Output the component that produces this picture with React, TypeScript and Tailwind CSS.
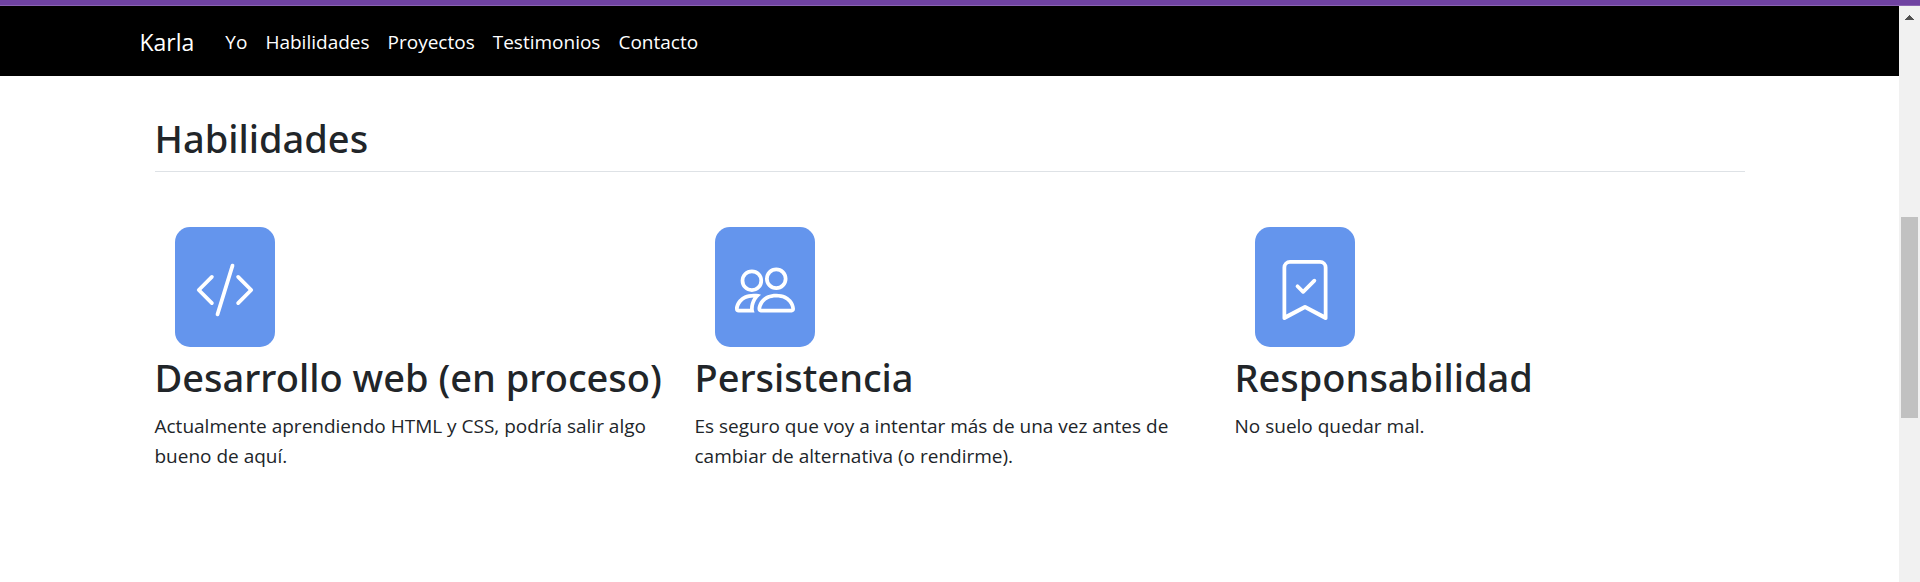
import { BsBookmarkCheck, BsCodeSlash, BsPeople } from "react-icons/bs";
import type { IconType } from "react-icons";

type Skill = { icon: IconType; title: string; text: string };

const links = ["Yo", "Habilidades", "Proyectos", "Testimonios", "Contacto"];

const skills: Skill[] = [
  {
    icon: BsCodeSlash,
    title: "Desarrollo web (en proceso)",
    text: "Actualmente aprendiendo HTML y CSS, podría salir algo bueno de aquí.",
  },
  {
    icon: BsPeople,
    title: "Persistencia",
    text: "Es seguro que voy a intentar más de una vez antes de cambiar de alternativa (o rendirme).",
  },
  {
    icon: BsBookmarkCheck,
    title: "Responsabilidad",
    text: "No suelo quedar mal.",
  },
];

function Navbar() {
  return (
    <nav className="bg-black pt-[13px] pb-[11px] text-white">
      <div className="mx-auto flex max-w-[1650px] items-center px-[15px]">
        <a href="#inicio" className="mr-[22px] py-1 text-[23px] leading-[38px]">
          Karla
        </a>
        <ul className="flex text-[19px] leading-[30px]">
          {links.map((link) => (
            <li key={link}>
              <a href={"#" + link.toLowerCase()} className="block px-[9px]">
                {link}
              </a>
            </li>
          ))}
        </ul>
      </div>
    </nav>
  );
}

function SkillCard({ icon: Icon, title, text }: Skill) {
  return (
    <article>
      <div className="ml-5 flex h-[120px] w-[100px] items-center justify-center rounded-[15px] bg-[#6495ed] pt-1.5 text-white">
        <Icon size={60} aria-hidden="true" />
      </div>
      <h2 className="mt-1.5 mb-2.5 font-['Noto_Sans','Open_Sans',sans-serif] text-[38px] leading-[48px] font-medium">
        {title}
      </h2>
      <p className="text-[19px] leading-[30px]">{text}</p>
    </article>
  );
}

function Scrollbar() {
  return (
    <div className="flex w-[21px] shrink-0 flex-col items-center bg-[#f1f1f1] pt-[9px]" aria-hidden="true">
      <svg width="9" height="5" viewBox="0 0 9 5" fill="#505050" shapeRendering="crispEdges">
        <path d="M4 0h1v1h1v1h1v1h1v1h1v1H0V4h1V3h1V2h1V1h1z" />
      </svg>
      <div className="mt-[197px] h-[201px] w-[17px] bg-[#c1c1c1]" />
    </div>
  );
}

export default function App() {
  return (
    <div className="flex min-h-screen flex-col bg-white font-['Open_Sans','Noto_Sans',sans-serif] text-[#212529]">
      <div className="h-1.5 border-b border-[#8a63b3] bg-[#6f42a1]" />
      <div className="flex grow">
        <div className="min-w-0 grow">
          <Navbar />
          <main id="habilidades" className="mx-auto max-w-[1650px] px-[30px] pt-[38px] pb-20">
            <h1 className="border-b border-[#dee2e6] pb-[9px] font-['Noto_Sans','Open_Sans',sans-serif] text-[38px] leading-[48px] font-medium">
              Habilidades
            </h1>
            <div className="mt-[55px] grid grid-cols-3 gap-[30px]">
              {skills.map((skill) => (
                <SkillCard key={skill.title} {...skill} />
              ))}
            </div>
          </main>
        </div>
        <Scrollbar />
      </div>
    </div>
  );
}
